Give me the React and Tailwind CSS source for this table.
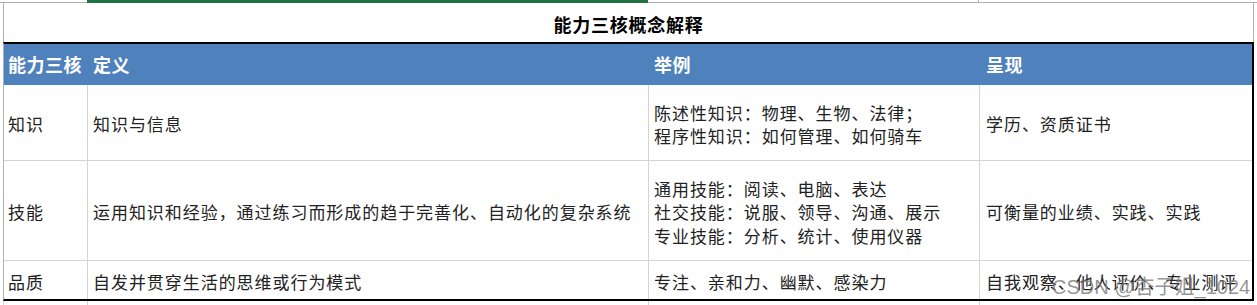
const rows = [
  {
    name: '知识',
    def: '知识与信息',
    examples: ['陈述性知识：物理、生物、法律；', '程序性知识：如何管理、如何骑车'],
    show: '学历、资质证书',
    h: 'h-[76px]',
  },
  {
    name: '技能',
    def: '运用知识和经验，通过练习而形成的趋于完善化、自动化的复杂系统',
    examples: ['通用技能：阅读、电脑、表达', '社交技能：说服、领导、沟通、展示', '专业技能：分析、统计、使用仪器'],
    show: '可衡量的业绩、实践、实践',
    h: 'h-[100px]',
  },
  {
    name: '品质',
    def: '自发并贯穿生活的思维或行为模式',
    examples: ['专注、亲和力、幽默、感染力'],
    show: '自我观察、他人评价、专业测评',
    h: 'h-[38px]',
  },
];

const cell = 'flex flex-col justify-center border-r border-[#d4d4d4]';

export default function App() {
  return (
    <div
      className="relative flex h-[305px] w-[1257px] flex-col overflow-hidden bg-white text-[#222]"
      style={{ fontFamily: '"Noto Sans CJK SC", "Liberation Sans", sans-serif' }}
    >
      {/* sheet edge above the table */}
      <div className="flex h-[3px]">
        <div className="w-[87px] border-b border-[#b0b0b0]" />
        <div className="h-[3px] w-[561px] bg-[#217346]" />
        <div className="w-[331px] border-b border-r border-[#b0b0b0]" />
        <div className="flex-1 border-b border-[#b0b0b0]" />
      </div>

      <div className="ml-[3px] flex h-[39px] w-[1251px] items-center justify-center border-l border-r border-[#b0b0b0] pt-[4px]">
        <span className="text-[18px] font-bold tracking-[0.75px] text-black">能力三核概念解释</span>
      </div>

      <div className="ml-[3px] flex w-[1251px] flex-col border-b-2 border-l border-r-2 border-t-2 border-b-black border-l-[#b0b0b0] border-r-black border-t-black">
        <div className="flex h-[41px] items-center bg-[#4f81bd] text-[18px] font-bold tracking-[0.5px] text-white">
          <div className="w-[84px] pl-[4px]">能力三核</div>
          <div className="w-[561px] pl-[5px]">定义</div>
          <div className="w-[331px] pl-[5px]">举例</div>
          <div className="flex-1 pl-[6px]">呈现</div>
        </div>

        {rows.map((r, i) => (
          <div
            key={r.name}
            className={`flex ${r.h} text-[17px] leading-[23.5px] tracking-[0.95px] ${i < rows.length - 1 ? 'border-b border-[#d4d4d4]' : ''}`}
          >
            <div className={`${cell} w-[84px] pl-[4px] pt-[3px]`}>{r.name}</div>
            <div className={`${cell} w-[561px] pl-[5px] pt-[3px]`}>{r.def}</div>
            <div className={`${cell} w-[331px] pl-[5px] pt-[3px]`}>
              {r.examples.map((e) => (
                <div key={e}>{e}</div>
              ))}
            </div>
            <div className="flex flex-1 flex-col justify-center pl-[6px] pt-[3px]">{r.show}</div>
          </div>
        ))}
      </div>

      {/* grid lines continuing below */}
      <div className="ml-[3px] flex flex-1">
        <div className="w-[85px] border-l border-r border-[#d4d4d4]" />
        <div className="w-[561px] border-r border-[#d4d4d4]" />
        <div className="w-[331px] border-r border-[#d4d4d4]" />
      </div>

      <div
        className="pointer-events-none absolute left-[1052px] top-[272px] text-[20px] text-[#7a7a7a]/80"
        style={{ fontFamily: '"Liberation Sans", "Noto Sans CJK SC", sans-serif' }}
      >
        CSDN @杏子姐_1024
      </div>
    </div>
  );
}
